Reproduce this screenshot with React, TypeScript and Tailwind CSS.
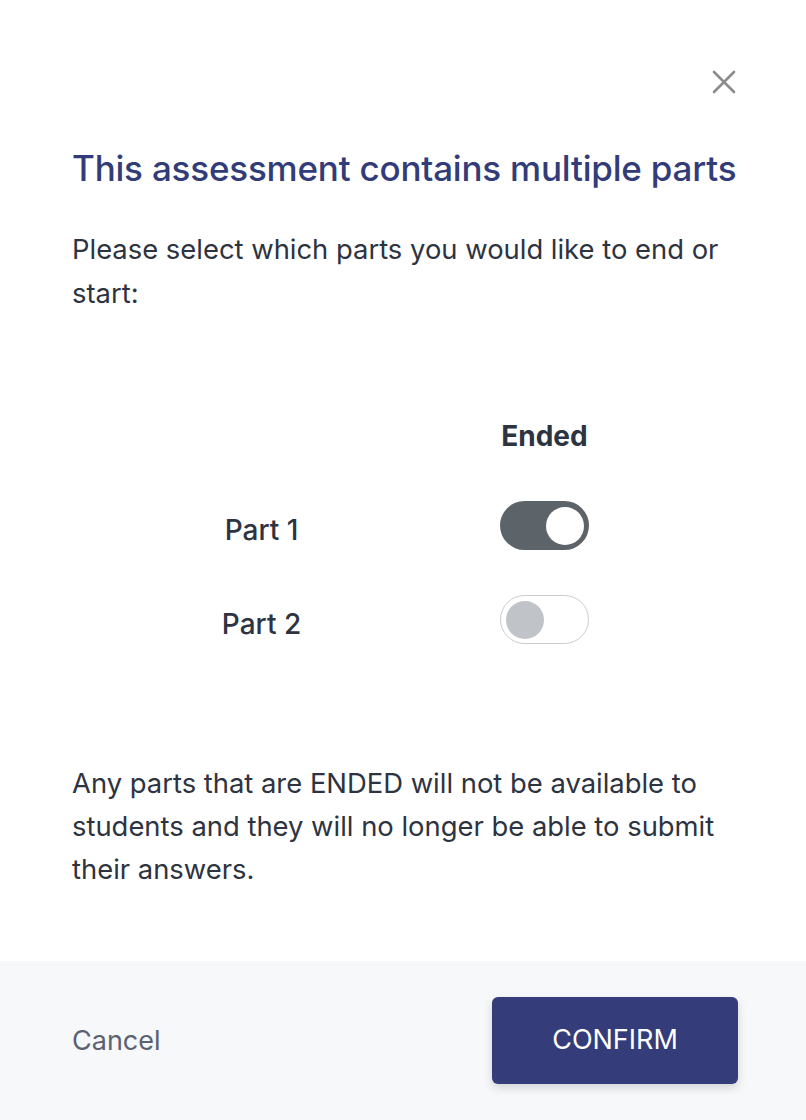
import React from "react";

function Toggle({ on }: { on: boolean }) {
  return on ? (
    <div className="w-[89px] h-[49px] rounded-full bg-[#5d6469] flex items-center justify-end px-[5px]">
      <div className="w-[38px] h-[38px] rounded-full bg-white" />
    </div>
  ) : (
    <div className="w-[89px] h-[49px] rounded-full bg-white border border-[#c9cccf] flex items-center justify-start px-[5px]">
      <div className="w-[38px] h-[38px] rounded-full bg-[#c0c4c8]" />
    </div>
  );
}

export default function App() {
  const body = { fontFamily: "Inter, 'Noto Sans', sans-serif" };
  return (
    <div className="w-[806px] h-[1120px] bg-white flex flex-col" style={body}>
      <div className="flex-1 flex flex-col px-[72px]">
        <div className="flex justify-end pt-[70px] -mr-[2px]">
          <svg width="24" height="24" viewBox="0 0 24 24" className="text-[#8c8c8c]">
            <path d="M2 2 L22 22 M22 2 L2 22" stroke="currentColor" strokeWidth="2.6" strokeLinecap="round" />
          </svg>
        </div>
        <h1 className="mt-[52px] text-[35px] leading-[44px] font-medium text-[#323c78] tracking-[-0.2px] whitespace-nowrap">
          This assessment contains multiple parts
        </h1>
        <p className="mt-[37px] text-[27.4px] leading-[44px] text-[#2d3340]">
          Please select which parts you would like to end or start:
        </p>
        <div className="mt-[101px] grid grid-cols-[283px_283px] justify-center items-start text-[#2d3340]">
          <div />
          <div className="text-center text-[28px] font-bold leading-[40px]">Ended</div>
          <div className="text-center text-[28px] leading-[39px] font-medium mt-[45px] pt-[10px]">Part 1</div>
          <div className="flex justify-center mt-[45px]">
            <Toggle on />
          </div>
          <div className="text-center text-[28px] leading-[39px] font-medium mt-[45px] pt-[10px]">Part 2</div>
          <div className="flex justify-center mt-[45px]">
            <Toggle on={false} />
          </div>
        </div>
        <p className="mt-[118px] text-[27.4px] leading-[43px] text-[#2d3340]">
          Any parts that are ENDED will not be available to students and they will no longer be able to submit their answers.
        </p>
      </div>
      <div className="h-[159px] bg-[#f7f8fa] flex items-center justify-between pl-[72px] pr-[68px]">
        <span className="text-[27px] text-[#5a6170] mt-[2px]">Cancel</span>
        <button className="w-[246px] h-[87px] rounded-[6px] bg-[#343c7a] text-white text-[27px] shadow-[0_4px_10px_rgba(0,0,0,0.15)]">
          CONFIRM
        </button>
      </div>
    </div>
  );
}
